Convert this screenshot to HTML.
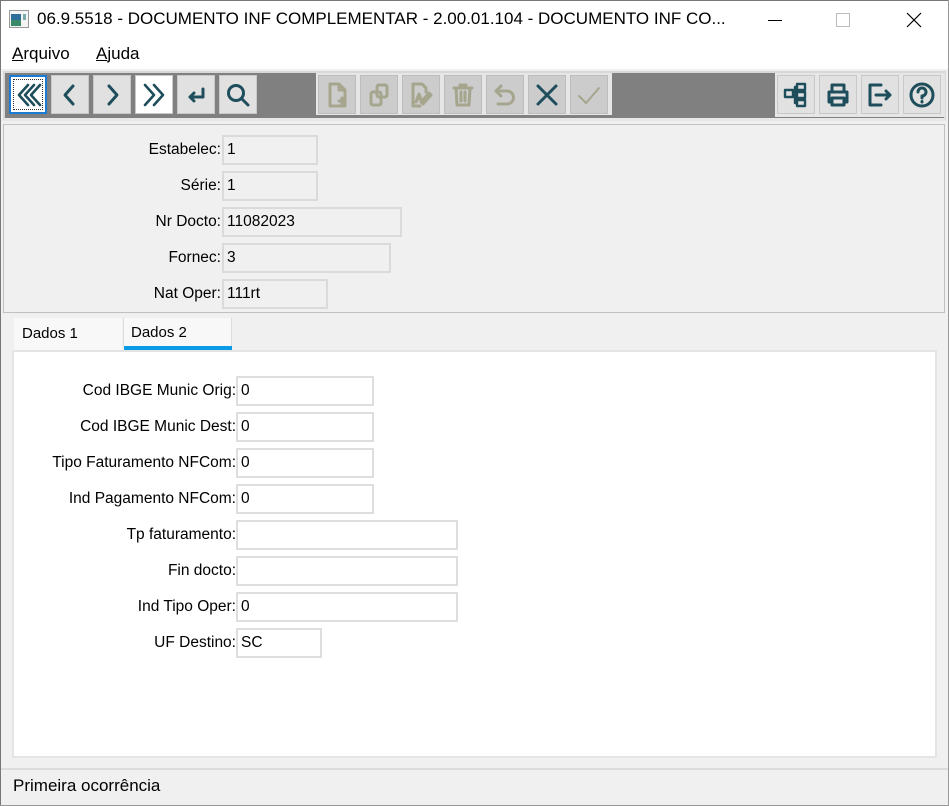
<!DOCTYPE html>
<html><head><meta charset="utf-8"><style>
*{box-sizing:border-box;margin:0;padding:0}
body{width:949px;height:806px;background:#f0f0f0;font-family:"Liberation Sans",sans-serif;font-size:15px;color:#000;position:relative;overflow:hidden}
.a{position:absolute}
.title{left:0;top:0;width:949px;height:38px;background:#fff;border:1px solid #777;border-bottom:none}
.menu{left:0;top:38px;width:949px;height:31px;background:#fff}
.tb{left:3px;top:71px;width:943px;height:50px;background:#808080;border:2px solid #d8d8d8;border-bottom:3px solid #e8e8e8}
.grp{background:#f0f0f0}
.btn{position:absolute;top:75px;width:38px;height:39px;background:#e1e1e1;border:1px solid #c8c8c8;display:flex;align-items:center;justify-content:center}
.btn.d{background:#cccccc;border-color:#bdbdbd}
.btn svg{width:28px;height:28px;fill:none;stroke:#1e4d5c;stroke-width:3;stroke-linecap:round;stroke-linejoin:round}
.btn.d svg{stroke:#a6a68e}
.lbl{position:absolute;text-align:right;line-height:30px;height:30px;font-size:15.5px}
.inp{position:absolute;height:30px;border:1px solid #d4d4d4;line-height:28px;padding-left:4px;font-size:15.5px}
.hdr .inp{background:#f0f0f0;border:2px solid #dadada;line-height:26px;padding-left:3px}
.tab .inp{background:#fff;border:2px solid #dedede;line-height:26px;padding-left:3px}
</style></head><body>
<div class="a title">
 <svg class="a" style="left:8px;top:9px" width="20" height="18"><rect x="0.5" y="0.5" width="19" height="17" fill="#f4f4f4" stroke="#999"/><rect x="2" y="4" width="10" height="12" fill="#3a8a6a"/><rect x="2" y="4" width="10" height="6" fill="#2d6f9a"/><rect x="14" y="4" width="3" height="6" fill="#7aa"/></svg>
 <div class="a" style="left:36px;top:8px;font-size:17px">06.9.5518 - DOCUMENTO INF COMPLEMENTAR - 2.00.01.104 - DOCUMENTO INF CO...</div>
 <div class="a" style="left:767px;top:19px;width:14px;height:1px;background:#000"></div>
 <div class="a" style="left:835px;top:12px;width:14px;height:14px;border:1px solid #bbb"></div>
 <svg class="a" style="left:905px;top:11px" width="16" height="16"><path d="M1 1L15 15M15 1L1 15" stroke="#000" stroke-width="1.2"/></svg>
</div>
<div class="a menu">
 <div class="a" style="left:12px;top:6px;font-size:17px"><u>A</u>rquivo</div>
 <div class="a" style="left:96px;top:6px;font-size:17px"><u>A</u>juda</div>
</div>
<div class="a tb"></div>
<div class="a grp" style="left:316px;top:73px;width:296px;height:42px;background:#e6e6e6"></div>
<div class="a grp" style="left:775px;top:73px;width:170px;height:44px;background:#e6e6e6"></div>

<div class="btn" style="left:9px;border:2px solid #1a7ad4;background:#fff"><div style="position:absolute;inset:2px;border:1px dotted #333"></div><svg viewBox="0 0 28 28"><path d="M14 4L5 14L14 24M20 4L11 14L20 24M26 4L17 14L26 24" stroke-width="2.6"/></svg></div>
<div class="btn" style="left:51px"><svg viewBox="0 0 28 28"><path d="M17 5L9 14L17 23"/></svg></div>
<div class="btn" style="left:93px"><svg viewBox="0 0 28 28"><path d="M11 5L19 14L11 23"/></svg></div>
<div class="btn" style="left:135px;background:#fff"><svg viewBox="0 0 28 28"><path d="M5 4L14 14L5 24M14 4L23 14L14 24" stroke-width="2.6"/></svg></div>
<div class="btn" style="left:177px"><svg viewBox="0 0 28 28"><path d="M21 8V16H8M12 12L8 16L12 20"/></svg></div>
<div class="btn" style="left:219px"><svg viewBox="0 0 28 28"><circle cx="12" cy="12" r="7.5"/><path d="M18 18L24 24"/></svg></div>

<div class="btn d" style="left:318px"><svg viewBox="0 0 28 28"><path d="M7 3H16L22 9V25H7Z M16 3V9H22 M19 17V23M16 20H22"/></svg></div>
<div class="btn d" style="left:360px"><svg viewBox="0 0 28 28"><rect x="12" y="4" width="10" height="12" rx="2"/><rect x="6" y="11" width="10" height="13" rx="2"/></svg></div>
<div class="btn d" style="left:402px"><svg viewBox="0 0 28 28"><path d="M6 3H15L19 7V11 M6 3V25H13 M9 21L12 13L15 21M10 18H14 M16 23L24 14L22 12L14 21Z"/></svg></div>
<div class="btn d" style="left:444px"><svg viewBox="0 0 28 28"><path d="M5 7H23M11 7V4H17V7M7 7L8 24H20L21 7M12 11V20M16 11V20"/></svg></div>
<div class="btn d" style="left:486px"><svg viewBox="0 0 28 28"><path d="M10 5L5 10L10 15M5 10H16A6 6 0 0 1 16 23H7"/></svg></div>
<div class="btn d" style="left:528px"><svg viewBox="0 0 28 28" style="stroke:#1e4d5c"><path d="M5 5L23 23M23 5L5 23"/></svg></div>
<div class="btn d" style="left:570px"><svg viewBox="0 0 28 28"><path d="M4 15L11 22L24 7" stroke-width="2"/></svg></div>

<div class="btn" style="left:777px"><svg viewBox="0 0 28 28" style="stroke-width:2.4"><rect x="3" y="9" width="8" height="7"/><rect x="15" y="3" width="8" height="6"/><rect x="15" y="11" width="8" height="6"/><rect x="15" y="19" width="8" height="6"/><path d="M11 12H15M13 6V22H15M13 6H15"/></svg></div>
<div class="btn" style="left:819px"><svg viewBox="0 0 28 28"><path d="M8 10V4H20V10 M8 21H5V11H23V21H20 M8 17H20V24H8Z"/></svg></div>
<div class="btn" style="left:861px"><svg viewBox="0 0 28 28"><path d="M15 4H4V24H15 M10 14H24M20 10L24 14L20 18"/></svg></div>
<div class="btn" style="left:903px"><svg viewBox="0 0 28 28"><circle cx="14" cy="14" r="11"/><path d="M10 11A4 4 0 1 1 14 15V17M14 20.5V21"/></svg></div>

<div class="a hdr" style="left:3px;top:124px;width:942px;height:189px;border:1px solid #c0c0c0;background:#f0f0f0">
 <div class="lbl" style="left:0;width:217px;top:10px">Estabelec:</div><div class="inp" style="left:218px;top:10px;width:96px">1</div>
 <div class="lbl" style="left:0;width:217px;top:46px">Série:</div><div class="inp" style="left:218px;top:46px;width:96px">1</div>
 <div class="lbl" style="left:0;width:217px;top:82px">Nr Docto:</div><div class="inp" style="left:218px;top:82px;width:180px">11082023</div>
 <div class="lbl" style="left:0;width:217px;top:118px">Fornec:</div><div class="inp" style="left:218px;top:118px;width:169px">3</div>
 <div class="lbl" style="left:0;width:217px;top:154px">Nat Oper:</div><div class="inp" style="left:218px;top:154px;width:106px">111rt</div>
</div>

<div class="a" style="left:14px;top:318px;width:108px;height:32px;background:#f8f8f8;line-height:32px;padding-left:8px">Dados 1</div>
<div class="a" style="left:123px;top:318px;width:1px;height:28px;background:#ddd"></div>
<div class="a" style="left:124px;top:318px;width:108px;height:32px;background:#f8f8f8;line-height:30px;padding-left:7px">Dados 2</div>
<div class="a" style="left:231px;top:318px;width:1px;height:28px;background:#ddd"></div>
<div class="a" style="left:124px;top:346px;width:108px;height:4px;background:#0a9be4"></div>

<div class="a tab" style="left:12px;top:350px;width:925px;height:408px;background:#fff;border:2px solid #e4e4e4">
 <div class="lbl" style="left:0;width:222px;top:24px">Cod IBGE Munic Orig:</div><div class="inp" style="left:222px;top:24px;width:138px">0</div>
 <div class="lbl" style="left:0;width:222px;top:60px">Cod IBGE Munic Dest:</div><div class="inp" style="left:222px;top:60px;width:138px">0</div>
 <div class="lbl" style="left:0;width:222px;top:96px">Tipo Faturamento NFCom:</div><div class="inp" style="left:222px;top:96px;width:138px">0</div>
 <div class="lbl" style="left:0;width:222px;top:132px">Ind Pagamento NFCom:</div><div class="inp" style="left:222px;top:132px;width:138px">0</div>
 <div class="lbl" style="left:0;width:222px;top:168px">Tp faturamento:</div><div class="inp" style="left:222px;top:168px;width:222px"></div>
 <div class="lbl" style="left:0;width:222px;top:204px">Fin docto:</div><div class="inp" style="left:222px;top:204px;width:222px"></div>
 <div class="lbl" style="left:0;width:222px;top:240px">Ind Tipo Oper:</div><div class="inp" style="left:222px;top:240px;width:222px">0</div>
 <div class="lbl" style="left:0;width:222px;top:276px">UF Destino:</div><div class="inp" style="left:222px;top:276px;width:86px">SC</div>
</div>

<div class="a" style="left:0;top:768px;width:949px;height:2px;background:#dcdcdc"></div>
<div class="a" style="left:0;top:0;width:1px;height:806px;background:#777"></div>
<div class="a" style="left:948px;top:0;width:1px;height:806px;background:#999"></div>
<div class="a" style="left:0;top:805px;width:949px;height:1px;background:#999"></div>
<div class="a" style="left:13px;top:776px;font-size:17px">Primeira ocorrência</div>
</body></html>
